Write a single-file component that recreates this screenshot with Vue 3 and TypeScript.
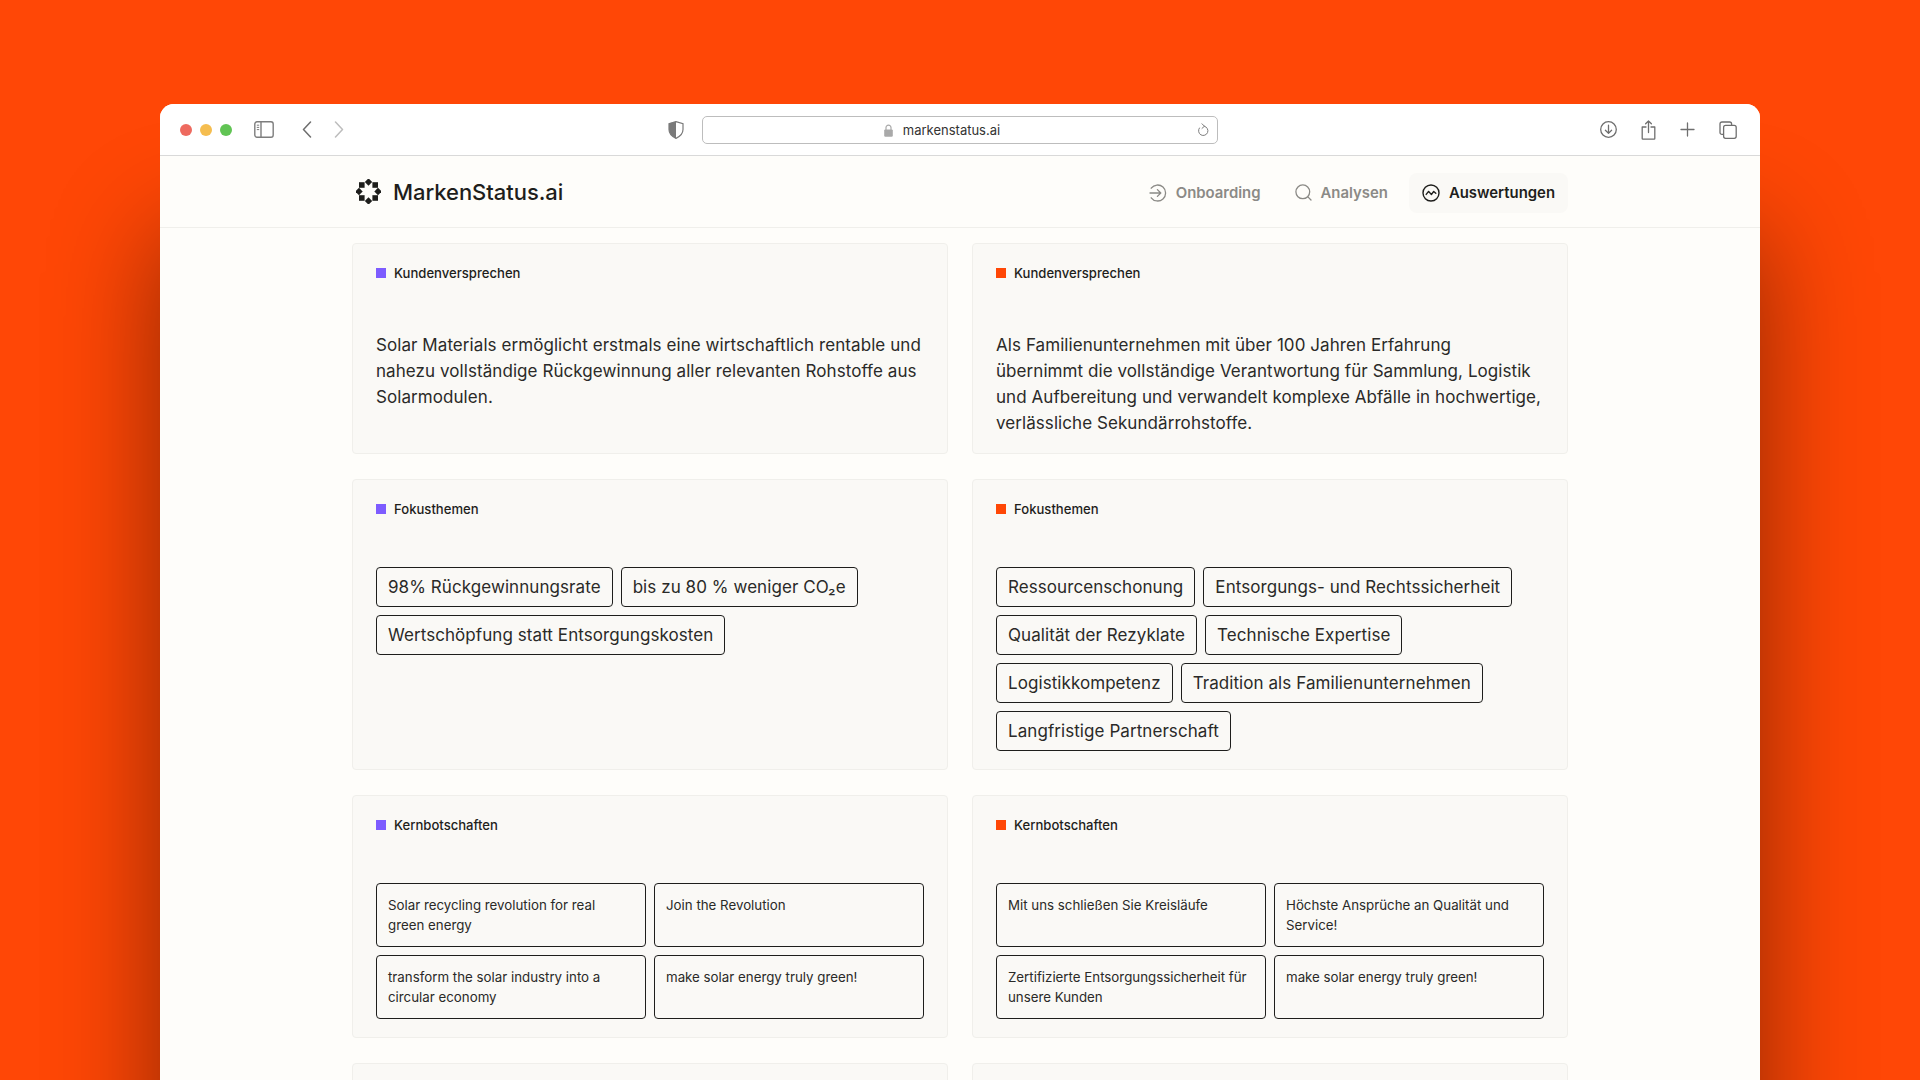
<script setup lang="ts">
interface Section {
  title: string
  kind: 'text' | 'tags' | 'messages'
  text?: string
  items?: string[]
}
const left: Section[] = [
  { title: 'Kundenversprechen', kind: 'text', text: 'Solar Materials ermöglicht erstmals eine wirtschaftlich rentable und nahezu vollständige Rückgewinnung aller relevanten Rohstoffe aus Solarmodulen.' },
  { title: 'Fokusthemen', kind: 'tags', items: ['98% Rückgewinnungsrate', 'bis zu 80 % weniger CO₂e', 'Wertschöpfung statt Entsorgungskosten'] },
  { title: 'Kernbotschaften', kind: 'messages', items: ['Solar recycling revolution for real green energy', 'Join the Revolution', 'transform the solar industry into a circular economy', 'make solar energy truly green!'] },
]
const right: Section[] = [
  { title: 'Kundenversprechen', kind: 'text', text: 'Als Familienunternehmen mit über 100 Jahren Erfahrung übernimmt die vollständige Verantwortung für Sammlung, Logistik und Aufbereitung und verwandelt komplexe Abfälle in hochwertige, verlässliche Sekundärrohstoffe.' },
  { title: 'Fokusthemen', kind: 'tags', items: ['Ressourcenschonung', 'Entsorgungs- und Rechtssicherheit', 'Qualität der Rezyklate', 'Technische Expertise', 'Logistikkompetenz', 'Tradition als Familienunternehmen', 'Langfristige Partnerschaft'] },
  { title: 'Kernbotschaften', kind: 'messages', items: ['Mit uns schließen Sie Kreisläufe', 'Höchste Ansprüche an Qualität und Service!', 'Zertifizierte Entsorgungssicherheit für unsere Kunden', 'make solar energy truly green!'] },
]
const rows = left.map((l, i) => [
  { ...l, accent: 'purple' },
  { ...right[i], accent: 'orange' },
])
</script>

<template>
  <div class="stage">
    <div class="window">
      <header class="toolbar">
        <div class="tb-left">
          <div class="lights">
            <span class="light red"></span>
            <span class="light yellow"></span>
            <span class="light green"></span>
          </div>
          <svg class="ic sidebar" width="20" height="17" viewBox="0 0 20 17" fill="none" stroke="#7d7d7d" stroke-width="1.4">
            <rect x="0.8" y="0.8" width="18.4" height="15.4" rx="2.2" />
            <path d="M7 1v15" />
            <path d="M2.8 4.2h2.4M2.8 6.4h2.4M2.8 8.6h2.4" stroke-width="1" />
          </svg>
          <svg class="ic back" width="10" height="17" viewBox="0 0 10 17" fill="none" stroke="#6e6e6e" stroke-width="1.5" stroke-linecap="round" stroke-linejoin="round">
            <path d="M8.5 1 1.5 8.5l7 7.5" />
          </svg>
          <svg class="ic forward" width="10" height="17" viewBox="0 0 10 17" fill="none" stroke="#bdbdbd" stroke-width="1.5" stroke-linecap="round" stroke-linejoin="round">
            <path d="M1.5 1l7 7.5-7 7.5" />
          </svg>
        </div>
        <div class="tb-center">
          <svg class="ic shield" width="16" height="18" viewBox="0 0 16 18">
            <path d="M8 .6 1 2.6v6c0 4 3 7 7 8.8 4-1.8 7-4.8 7-8.8v-6z" fill="#fff" stroke="#7a7a7a" stroke-width="1.2" />
            <path d="M8 .6 1 2.6v6c0 4 3 7 7 8.8z" fill="#7a7a7a" />
          </svg>
          <div class="urlbar">
            <svg class="lock" width="9" height="13" viewBox="0 0 9 13">
              <path d="M2 6V3.6a2.5 2.5 0 0 1 5 0V6" fill="none" stroke="#a9a9a9" stroke-width="1.2" />
              <rect x="0.2" y="5.4" width="8.6" height="7.4" rx="1.2" fill="#a9a9a9" />
            </svg>
            <span class="url">markenstatus.ai</span>
            <svg class="reload" width="12" height="14" viewBox="0 0 12 14" fill="none" stroke="#7d7d7d" stroke-width="1" stroke-linecap="round" stroke-linejoin="round">
              <path d="M7.4 3.2A4.7 4.7 0 1 1 2.4 5" />
              <path d="M5 .8 7.4 3.2 5 5.4" />
            </svg>
          </div>
        </div>
        <div class="tb-right">
          <svg class="ic" width="17" height="17" viewBox="0 0 17 17" fill="none" stroke="#6f6f6f" stroke-width="1.3" stroke-linecap="round" stroke-linejoin="round">
            <circle cx="8.5" cy="8.5" r="7.8" />
            <path d="M8.5 4.2v8M5.4 9.3l3.1 3.1 3.1-3.1" />
          </svg>
          <svg class="ic" width="15" height="20" viewBox="0 0 15 20" fill="none" stroke="#6f6f6f" stroke-width="1.3" stroke-linecap="round" stroke-linejoin="round">
            <path d="M5 7H1.2v11.6c0 .3.2.6.6.6h11.4c.4 0 .6-.3.6-.6V7H10" />
            <path d="M7.5 1v11.5M4.6 3.8 7.5 1l2.9 2.8" />
          </svg>
          <svg class="ic" width="15" height="15" viewBox="0 0 15 15" fill="none" stroke="#6f6f6f" stroke-width="1.3" stroke-linecap="round">
            <path d="M7.5 1v13M1 7.5h13" />
          </svg>
          <svg class="ic" width="18" height="18" viewBox="0 0 18 18" fill="none" stroke="#6f6f6f" stroke-width="1.3" stroke-linejoin="round">
            <path d="M4.2 13.4H3c-1.2 0-2-.8-2-2V3c0-1.2.8-2 2-2h7.6c1.2 0 2 .8 2 2v1.2" />
            <rect x="4.6" y="4.4" width="12.6" height="12.9" rx="2" />
          </svg>
        </div>
      </header>

      <div class="page">
        <nav class="nav">
          <div class="brand">
            <svg class="logo" width="25" height="25" viewBox="0 0 25 25" fill="#1e1e1c">
              <rect x="9.9" y="0.4" width="5.2" height="5.2" transform="rotate(45 12.5 3)" />
              <rect x="9.9" y="19.4" width="5.2" height="5.2" transform="rotate(45 12.5 22)" />
              <rect x="0.4" y="9.9" width="5.2" height="5.2" transform="rotate(45 3 12.5)" />
              <rect x="19.4" y="9.9" width="5.2" height="5.2" transform="rotate(45 22 12.5)" />
              <rect x="3" y="3.2" width="5.6" height="5.6" />
              <rect x="16.4" y="3.2" width="5.6" height="5.6" />
              <rect x="3" y="16.2" width="5.6" height="5.6" />
              <rect x="16.4" y="16.2" width="5.6" height="5.6" />
            </svg>
            <span class="brand-name">MarkenStatus.ai</span>
          </div>
          <div class="links">
            <a class="link">
              <svg width="18" height="18" viewBox="0 0 18 18" fill="none" stroke="#8b8a86" stroke-width="1.3" stroke-linecap="round" stroke-linejoin="round">
                <path d="M2.2 4.2A8 8 0 1 1 2.2 13.8" />
                <path d="M1 9h10.5M8.4 5.6 11.8 9l-3.4 3.4" />
              </svg>
              Onboarding
            </a>
            <a class="link">
              <svg width="17" height="17" viewBox="0 0 17 17" fill="none" stroke="#8b8a86" stroke-width="1.3" stroke-linecap="round">
                <circle cx="7.8" cy="7.8" r="6.9" />
                <path d="m12.9 12.9 3.1 3.1" />
              </svg>
              Analysen
            </a>
            <a class="link active">
              <svg width="18" height="18" viewBox="0 0 18 18" fill="none" stroke="#1e1e1c" stroke-width="1.4" stroke-linecap="round" stroke-linejoin="round">
                <circle cx="9" cy="9" r="8" />
                <path d="M4.2 10.4 6.6 7.4l2.8 3.1 2.3-3.1 2.1 1.9" />
              </svg>
              Auswertungen
            </a>
          </div>
        </nav>

        <main class="grid">
          <template v-for="(row, r) in rows" :key="r">
            <section v-for="(card, c) in row" :key="c" class="card">
              <h3 class="label"><i class="dot" :class="card.accent"></i>{{ card.title }}</h3>
              <p v-if="card.kind === 'text'" class="body">{{ card.text }}</p>
              <div v-else-if="card.kind === 'tags'" class="tags">
                <span v-for="t in card.items" :key="t" class="tag">{{ t }}</span>
              </div>
              <div v-else class="msgs">
                <div v-for="m in card.items" :key="m" class="msg">{{ m }}</div>
              </div>
            </section>
          </template>
          <section class="card empty"></section>
          <section class="card empty"></section>
        </main>
      </div>
    </div>
  </div>
</template>

<style scoped>
.stage {
  width: 1920px;
  height: 1080px;
  overflow: hidden;
  background: #ff4706;
  padding: 104px 160px 0;
  box-sizing: border-box;
  font-family: Inter, "Liberation Sans", sans-serif;
  color: #1e1e1c;
}
.window {
  width: 1600px;
  height: 1200px;
  border-radius: 14px 14px 0 0;
  box-shadow: 0 130px 110px rgba(0, 0, 0, 0.45);
  background: #fefdfa;
  overflow: hidden;
}
.toolbar {
  height: 52px;
  box-sizing: border-box;
  background: #fff;
  border-bottom: 1px solid #d9d9d9;
  display: flex;
  align-items: center;
  justify-content: space-between;
  padding: 0 23px 0 20px;
  position: relative;
}
.ic { display: block; flex: none; }
.tb-left { display: flex; align-items: center; }
.lights { display: flex; gap: 8px; }
.light { width: 12px; height: 12px; border-radius: 50%; }
.red { background: #ee6a5f; }
.yellow { background: #f5bd4f; }
.green { background: #61c454; }
.sidebar { margin-left: 22px; }
.back { margin-left: 28px; }
.forward { margin-left: 22px; }
.tb-center {
  position: absolute;
  left: 508px;
  top: 12px;
  display: flex;
  align-items: center;
  gap: 18px;
}
.urlbar {
  width: 516px;
  height: 28px;
  box-sizing: border-box;
  border: 1px solid #bdbdbd;
  border-radius: 5px;
  display: flex;
  align-items: center;
  justify-content: center;
  gap: 10px;
  padding-right: 36px;
  position: relative;
}
.url { font-size: 13px; color: #333; letter-spacing: 0; }
.reload { position: absolute; right: 8px; top: 6px; }
.tb-right { display: flex; align-items: center; gap: 24px; }
.nav {
  width: 1216px;
  margin: 0 auto;
  height: 71px;
  display: flex;
  align-items: center;
  justify-content: space-between;
}
.page { background: #fefdfa; }
.brand { display: flex; align-items: center; gap: 12px; margin-left: 4px; }
.brand-name { font-size: 22px; font-weight: 500; letter-spacing: -0.002em; color: #1e1e1c; }
.links { display: flex; align-items: center; gap: 8px; margin-top: 2px; }
.link {
  display: flex;
  align-items: center;
  gap: 9px;
  height: 40px;
  padding: 0 13px;
  border-radius: 8px;
  font-size: 14.9px;
  font-weight: 600;
  color: #8b8a86;
}
.link.active { background: #faf9f6; color: #1e1e1c; }
.grid {
  border-top: 1px solid #f0efeb;
  display: grid;
  grid-template-columns: 596px 596px;
  column-gap: 24px;
  row-gap: 25px;
  justify-content: center;
  padding-top: 15px;
}
.card {
  background: #faf9f6;
  border: 1px solid #f0efeb;
  border-radius: 4px;
  padding: 22px 23px 18px;
  box-sizing: border-box;
}
.card.empty { min-height: 100px; }
.label {
  margin: 0 0 51px;
  display: flex;
  align-items: center;
  gap: 8px;
  font-size: 13.1px;
  line-height: 14px;
  font-weight: 500;
  color: #1e1e1c;
}
.dot { width: 10px; height: 10px; flex: none; }
.purple { background: #7d5cff; }
.orange { background: #ff4706; }
.body {
  margin: 0 0 -1px;
  padding-top: 1px;
  max-width: 546.5px;
  font-size: 17px;
  line-height: 26px;
  letter-spacing: 0.07px;
  color: #2a2a28;
}
.tags { display: flex; flex-wrap: wrap; gap: 8px 8px; }
.tag {
  height: 40px;
  box-sizing: border-box;
  display: flex;
  align-items: center;
  padding: 0 11px;
  border: 1px solid #1e1e1c;
  border-radius: 4px;
  font-size: 17px;
  letter-spacing: 0.07px;
  color: #2a2a28;
}
.msgs { display: grid; grid-template-columns: 1fr 1fr; gap: 8px; }
.msg {
  height: 64px;
  box-sizing: border-box;
  padding: 11px;
  border: 1px solid #1e1e1c;
  border-radius: 4px;
  font-size: 13.3px;
  line-height: 20px;
  color: #2a2a28;
}
</style>

<style>
html, body { margin: 0; overflow: hidden; }
</style>
